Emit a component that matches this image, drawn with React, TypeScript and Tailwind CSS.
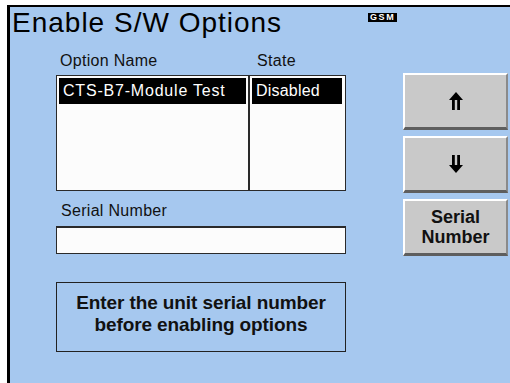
const font = { fontFamily: '"Liberation Sans", Arial, sans-serif' };

function UpArrow() {
  return (
    <svg width="14" height="18" viewBox="0 0 14 18" className="block">
      <path d="M7 0 L14 8 L11 8 L11 18 L8.2 18 L8.2 8 L5.8 8 L5.8 18 L3 18 L3 8 L0 8 Z" fill="#000" />
    </svg>
  );
}

function DownArrow() {
  return (
    <svg width="14" height="18" viewBox="0 0 14 18" className="block">
      <path d="M7 18 L14 10 L11 10 L11 0 L8.2 0 L8.2 10 L5.8 10 L5.8 0 L3 0 L3 10 L0 10 Z" fill="#000" />
    </svg>
  );
}

function SoftKey({ children }: { children: React.ReactNode }) {
  return (
    <div className="flex h-[57px] items-center justify-center border-t-2 border-l-2 border-r-2 border-b-[3px] border-t-white border-l-white border-r-[#8a8a8a] border-b-[#5e5e5e] bg-[#c9c9c9]">
      {children}
    </div>
  );
}

export default function App() {
  return (
    <div className="h-[383px] w-[510px] overflow-hidden bg-white pl-[7px] pt-[5px]" style={font}>
      <div className="relative flex h-[378px] flex-col border-l-[3px] border-t-2 border-black bg-[#a6c8ef]">
        {/* header */}
        <div className="h-[29px] pl-[2px] pt-[2px]">
          <span className="block text-[28px] leading-[28px] tracking-[1px] text-black">Enable S/W Options</span>
        </div>
        <div className="absolute left-[358px] top-[6px] bg-black px-[2px] text-[9px] font-bold leading-[9px] tracking-[1.6px] text-white">
          GSM
        </div>

        <div className="flex">
          {/* left column */}
          <div className="ml-[46px] w-[290px] pt-[17px]">
            <div className="flex text-[16px] leading-[16px] tracking-[0.3px] text-[#111]">
              <span className="w-[196px] pl-[4px]">Option Name</span>
              <span className="pl-[5px]">State</span>
            </div>

            <div className="mt-[6px] flex h-[116px]">
              <div className="w-[194px] border border-r-2 border-[#2a2a2a] bg-[#fcfcfc] p-[2px]">
                <div className="h-[26px] bg-black pl-[4px] text-[16px] leading-[26px] tracking-[0.8px] text-white">
                  CTS-B7-Module Test
                </div>
              </div>
              <div className="flex-1 border border-l-0 border-[#2a2a2a] bg-[#fcfcfc] pb-[2px] pl-[2px] pr-[3px] pt-[2px]">
                <div className="h-[26px] bg-black pl-[4px] text-[16px] leading-[26px] tracking-[0.2px] text-white">
                  Disabled
                </div>
              </div>
            </div>

            <div className="mt-[12px] pl-[5px] text-[16px] leading-[16px] tracking-[0.3px] text-[#111]">Serial Number</div>
            <div className="mt-[7px] h-[28px] border border-t-2 border-[#2a2a2a] bg-[#fcfcfc]" />

            <div className="mt-[28px] h-[70px] border border-[#222] pt-[9px] text-center text-[19px] font-bold leading-[22px] tracking-[-0.1px] text-[#111]">
              <div>Enter the unit serial number</div>
              <div>before enabling options</div>
            </div>
          </div>

          {/* right column: soft keys */}
          <div className="ml-[57px] flex w-[105px] flex-col gap-[6px] pt-[37px]">
            <SoftKey>
              <UpArrow />
            </SoftKey>
            <SoftKey>
              <DownArrow />
            </SoftKey>
            <SoftKey>
              <div className="text-center text-[18px] font-bold leading-[20px] text-[#111]">
                <div>Serial</div>
                <div>Number</div>
              </div>
            </SoftKey>
          </div>
        </div>
      </div>
    </div>
  );
}
